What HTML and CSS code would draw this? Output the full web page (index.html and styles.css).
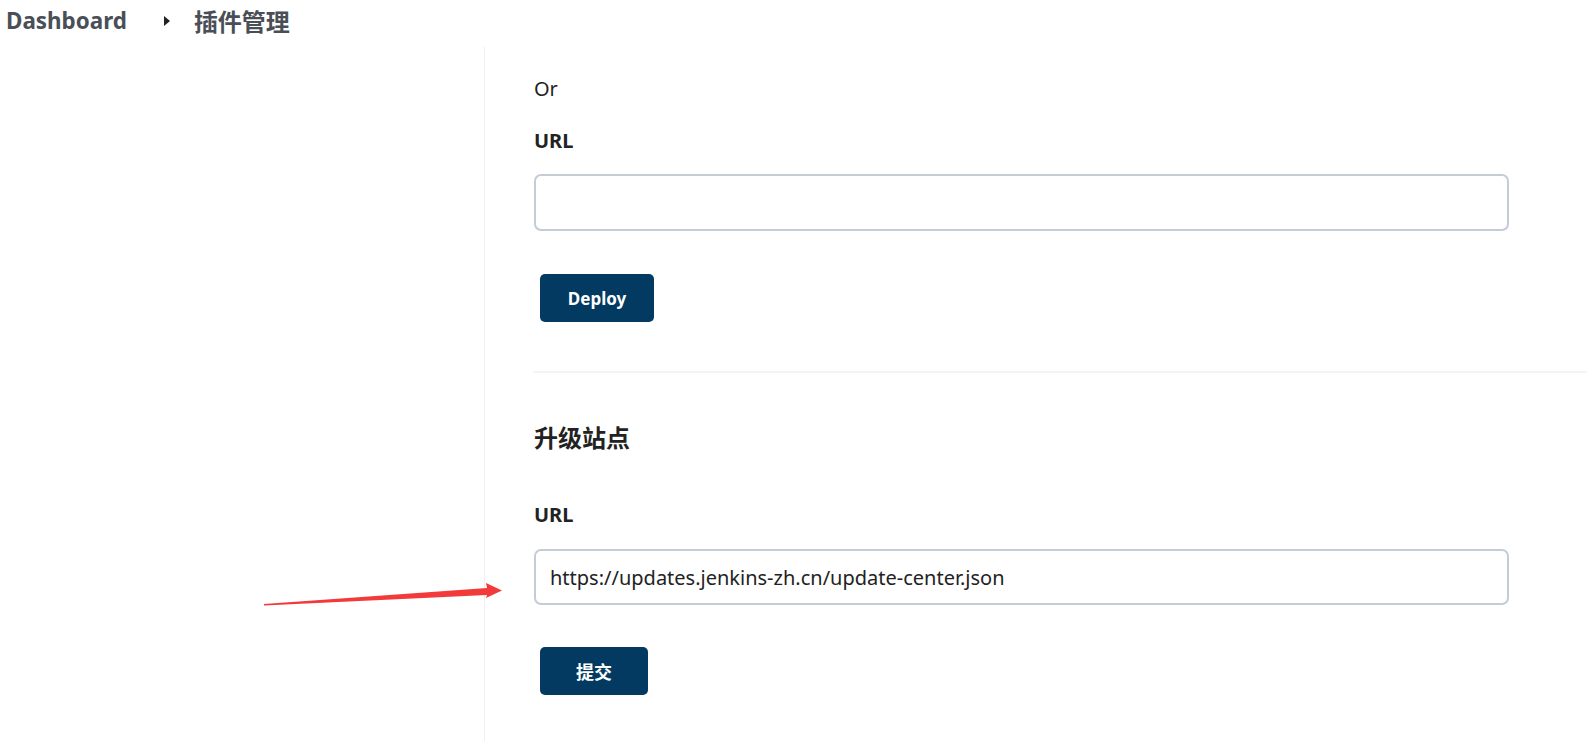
FILE: index.html
```html
<!DOCTYPE html>
<html lang="zh">
<head>
<meta charset="utf-8">
<title>插件管理</title>
<link rel="stylesheet" href="styles.css">
</head>
<body>
<header class="breadcrumbs">
  <a class="crumb">Dashboard</a>
  <span class="chevron"></span>
  <a class="crumb current">插件管理</a>
</header>
<div class="page">
  <aside class="side"></aside>
  <main class="main">
    <p class="or">Or</p>
    <label class="label">URL</label>
    <input class="field" type="text" value="">
    <button class="btn btn-deploy">Deploy</button>
    <hr class="divider">
    <h2 class="title">升级站点</h2>
    <label class="label label-2">URL</label>
    <input class="field field-2" type="text" value="https://updates.jenkins-zh.cn/update-center.json">
    <button class="btn btn-submit">提交</button>
  </main>
</div>
<svg class="arrow" width="1586" height="741" viewBox="0 0 1586 741">
  <polygon points="264,604 487,588 486,583 502,590.5 486,598 487,595 264,605.5" fill="#f33a3a"/>
</svg>
</body>
</html>
```
FILE: styles.css
```css
* { box-sizing: border-box; }
html, body { margin: 0; padding: 0; background: #fff; }
body {
  font-family: "Noto Sans", "Noto Sans CJK SC", sans-serif;
  color: #1f1f24;
  height: 741px;
  overflow: hidden;
  position: relative;
}
.breadcrumbs {
  height: 47px;
  display: flex;
  align-items: center;
  padding: 0 0 6px 6px;
}
.crumb {
  font-family: "Noto Sans", "Noto Sans CJK SC", sans-serif;
  font-weight: 700;
  font-size: 22.4px;
  color: #4a4f57;
}
.crumb.current { font-size: 24px; }
.chevron {
  width: 0; height: 0;
  border-top: 5px solid transparent;
  border-bottom: 5px solid transparent;
  border-left: 6px solid #222;
  margin: 0 24px 0 37px;
}
.page {
  display: flex;
  height: 694px;
}
.side {
  width: 485px;
  flex: none;
  border-right: 1px solid #efeff1;
}
.main {
  flex: 1;
  padding: 29px 0 0 49px;
  display: flex;
  flex-direction: column;
  align-items: flex-start;
}
.or {
  margin: 0;
  font-size: 20px;
  line-height: 26px;
  color: #222;
}
.label {
  display: block;
  margin-top: 26px;
  font-size: 20px;
  line-height: 26px;
  font-weight: 700;
  color: #222;
}
.field {
  display: block;
  margin-top: 20px;
  width: 975px;
  height: 57px;
  border: 2px solid #c3ccd7;
  border-radius: 7px;
  padding: 0 14px;
  font-family: "Noto Sans", "Noto Sans CJK SC", sans-serif;
  font-size: 20px;
  color: #222;
  background: #fff;
  outline: none;
}
.field-2 { margin-top: 21px; height: 56px; }
.btn {
  margin: 43px 0 0 6px;
  height: 48px;
  border: none;
  border-radius: 5px;
  background: #033a62;
  color: #fff;
  font-family: "Noto Sans", "Noto Sans CJK SC", sans-serif;
  font-weight: 700;
  font-size: 17px;
  cursor: pointer;
}
.btn-deploy { width: 114px; }
.btn-submit { width: 108px; font-size: 18px; margin-top: 42px; }
.divider {
  align-self: stretch;
  margin: 49px 0 0 0;
  border: none;
  border-top: 2px solid #f3f3f4;
  height: 0;
}
.title {
  margin: 50px 0 0 0;
  font-size: 24px;
  line-height: 30px;
  font-weight: 700;
  color: #222;
}
.label-2 { margin-top: 49px; }
.arrow {
  position: absolute;
  left: 0; top: 0;
  pointer-events: none;
}
```
